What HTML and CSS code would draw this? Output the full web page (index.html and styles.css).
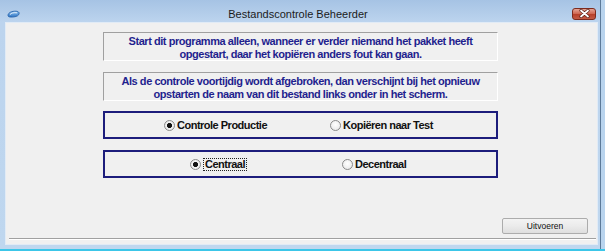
FILE: index.html
```html
<!DOCTYPE html>
<html lang="nl">
<head>
    <meta charset="UTF-8">
    <meta name="viewport" content="width=device-width, initial-scale=1.0">
    <title>Bestandscontrole Beheerder</title>
    <link rel="stylesheet" href="styles.css">
</head>
<body>
    <div class="window">
        <div class="titlebar">
            <svg class="app-icon" width="13" height="8" viewBox="0 0 13 8">
                <defs>
                    <linearGradient id="lens" x1="0" y1="0" x2="0" y2="1">
                        <stop offset="0" stop-color="#8fc3f0"/>
                        <stop offset="1" stop-color="#2f74c2"/>
                    </linearGradient>
                </defs>
                <path d="M1 5.5 C1 2.5 5 1 9 1.2 C12 1.4 12.6 3 11.8 4.6 C10.8 6.6 6 7.4 3 7 C1.6 6.8 1 6.3 1 5.5 Z" fill="url(#lens)" stroke="#1d5ba6" stroke-width="0.8"/>
                <path d="M3 4.6 C4 3 7 2.4 10 2.8" fill="none" stroke="#ffffff" stroke-width="1" opacity="0.8"/>
            </svg>
            <div class="title">Bestandscontrole Beheerder</div>
            <div class="close-btn">
                <svg width="11" height="9" viewBox="0 0 11 9">
                    <path d="M2 1.5 L9 7.5 M9 1.5 L2 7.5" stroke="#5a2016" stroke-width="3.2" stroke-linecap="round"/>
                    <path d="M2 1.5 L9 7.5 M9 1.5 L2 7.5" stroke="#ffffff" stroke-width="1.8" stroke-linecap="round"/>
                </svg>
            </div>
        </div>

        <div class="client">
            <div class="panel">
                <p class="notice">Start dit programma alleen, wanneer er verder niemand het pakket heeft<br>opgestart, daar het kopiëren anders fout kan gaan.</p>
                <p class="notice notice-second">Als de controle voortijdig wordt afgebroken, dan verschijnt bij het opnieuw<br>opstarten de naam van dit bestand links onder in het scherm.</p>

                <div class="group group-mode">
                    <label class="option"><input class="radio" type="radio" name="mode" checked> Controle Productie</label>
                    <label class="option"><input class="radio" type="radio" name="mode"> Kopiëren naar Test</label>
                </div>

                <div class="group group-location">
                    <label class="option"><input class="radio" type="radio" name="location" checked> <span class="focused">Centraal</span></label>
                    <label class="option"><input class="radio" type="radio" name="location"> Decentraal</label>
                </div>
            </div>

            <div class="actions">
                <button class="btn">Uitvoeren</button>
            </div>
            <div class="separator"></div>
        </div>
    </div>
</body>
</html>
```

FILE: styles.css
```css
html, body {
    margin: 0;
    padding: 0;
}

body {
    width: 605px;
    height: 251px;
    box-sizing: border-box;
    background-color: #b9d4ee;
    border-bottom: 2px solid #3cc6e8;
    font-family: "Liberation Sans", Arial, sans-serif;
    overflow: hidden;
}

.window {
    width: 601px;
    height: 249px;
    box-sizing: border-box;
    border-right: 1px solid #5d7a99;
    background: linear-gradient(#a6c3e4, #bcd4ee 22px, #bfd7ef);
    display: flex;
    flex-direction: column;
}

.titlebar {
    height: 22px;
    box-sizing: border-box;
    padding-top: 5px;
    display: flex;
    align-items: center;
}

.app-icon {
    margin-left: 7px;
}

.title {
    flex: 1;
    text-align: center;
    font-size: 11px;
    color: #1b1b1b;
    margin-left: 4px;
}

.close-btn {
    width: 24px;
    height: 12px;
    box-sizing: border-box;
    margin-right: 4px;
    border: 1px solid #7d2b1e;
    border-radius: 3px;
    background: linear-gradient(#e6a596, #d06a55 45%, #b7412b 55%, #c45a44);
    display: flex;
    align-items: center;
    justify-content: center;
}

.client {
    flex: 1;
    margin: 0 2px 4px 5px;
    border: 1px solid #e1ebf6;
    background-color: #f0f0f0;
    display: flex;
    flex-direction: column;
    padding: 9px 0 4px 0;
}

.panel {
    margin-left: 97px;
    width: 395px;
}

.notice {
    margin: 0;
    height: 29px;
    box-sizing: border-box;
    padding-top: 2px;
    border-top: 1px solid #a0a0a0;
    border-left: 1px solid #a0a0a0;
    border-bottom: 1px solid #ffffff;
    border-right: 1px solid #ffffff;
    text-align: center;
    font-size: 11px;
    font-weight: bold;
    letter-spacing: -0.45px;
    line-height: 13px;
    color: #1f1f8e;
    white-space: nowrap;
}

.notice-second {
    margin-top: 11px;
}

.group {
    height: 28px;
    box-sizing: border-box;
    border: 2px solid #1d1d7c;
    display: grid;
    align-items: center;
    margin-top: 10px;
}

.group-mode {
    grid-template-columns: 166px auto;
    padding-left: 59px;
}

.group-location {
    margin-top: 11px;
    grid-template-columns: 152px auto;
    padding-left: 85px;
}

.option {
    display: flex;
    align-items: center;
    gap: 2px;
    font-size: 11px;
    font-weight: bold;
    letter-spacing: -0.5px;
    color: #111;
    white-space: nowrap;
}

.radio {
    appearance: none;
    -webkit-appearance: none;
    width: 11px;
    height: 11px;
    margin: 0;
    border: 1px solid #8a8a8a;
    border-radius: 50%;
    background: radial-gradient(circle at 50% 40%, #ffffff, #e4e4e4);
}

.radio:checked {
    background: radial-gradient(circle, #111 0 2.2px, #f2f2f2 2.9px, #e4e4e4);
}

.focused {
    border: 1px dotted #222;
    padding: 0 1px;
    line-height: 11px;
}

.actions {
    margin-top: auto;
    display: flex;
    justify-content: flex-end;
    padding-right: 9px;
}

.btn {
    width: 86px;
    height: 16px;
    padding: 0;
    border: 1px solid #acacac;
    border-radius: 2px;
    background: linear-gradient(#f3f3f3, #ebebeb 50%, #dedede);
    font-family: "Liberation Sans", Arial, sans-serif;
    font-size: 8.5px;
    color: #111;
}

.separator {
    margin: 4px 1px 0 3px;
    height: 1px;
    background-color: #a0a0a0;
    border-bottom: 1px solid #ffffff;
}
```
